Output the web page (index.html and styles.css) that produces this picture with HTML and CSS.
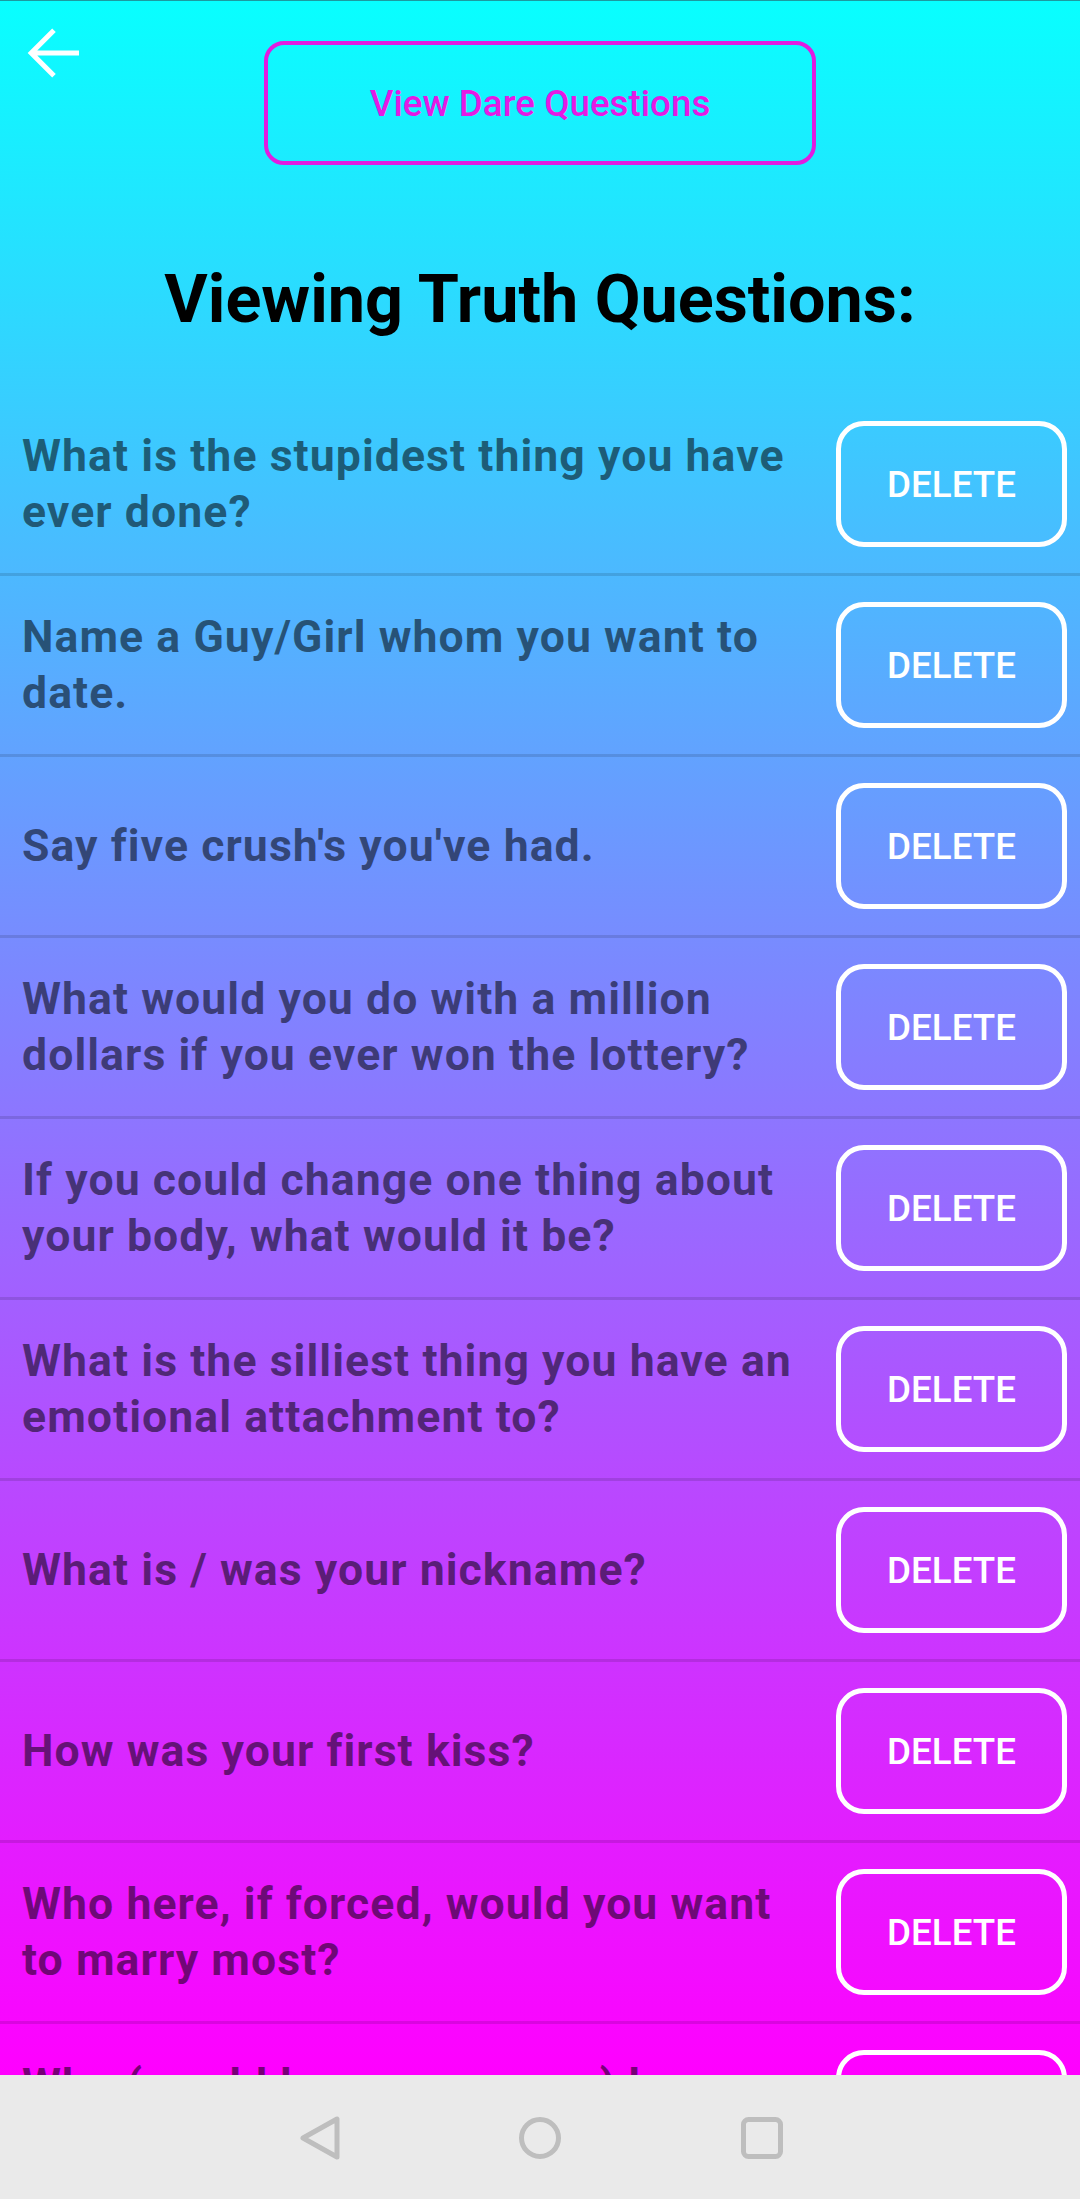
FILE: index.html
```html
<!DOCTYPE html>
<html lang="en">
<head>
<meta charset="utf-8">
<title>Viewing Truth Questions</title>
<link rel="stylesheet" href="styles.css">
</head>
<body>
<div class="screen">
  <main class="app">
    <header class="top">
      <button class="back" aria-label="Back">
        <svg viewBox="0 0 24 24" width="78" height="78"><path d="M20 12H5.6M12.3 5L5.3 12l7 7" fill="none" stroke="#fff" stroke-width="1.55" stroke-linejoin="miter"/></svg>
      </button>
      <button class="switch">View Dare Questions</button>
    </header>
    <h1 class="title">Viewing Truth Questions:</h1>
    <ul class="list">
      <li class="row"><p class="q">What is the stupidest thing you have ever done?</p><button class="del">DELETE</button></li>
      <li class="row"><p class="q">Name a Guy/Girl whom you want to date.</p><button class="del">DELETE</button></li>
      <li class="row"><p class="q">Say five crush's you've had.</p><button class="del">DELETE</button></li>
      <li class="row"><p class="q">What would you do with a million dollars if you ever won the lottery?</p><button class="del">DELETE</button></li>
      <li class="row"><p class="q">If you could change one thing about your body, what would it be?</p><button class="del">DELETE</button></li>
      <li class="row"><p class="q">What is the silliest thing you have an emotional attachment to?</p><button class="del">DELETE</button></li>
      <li class="row"><p class="q">What is / was your nickname?</p><button class="del">DELETE</button></li>
      <li class="row"><p class="q">How was your first kiss?</p><button class="del">DELETE</button></li>
      <li class="row"><p class="q">Who here, if forced, would you want to marry most?</p><button class="del">DELETE</button></li>
      <li class="row"><p class="q">Who (would be your answer) here would you kiss?</p><button class="del">DELETE</button></li>
    </ul>
  </main>
  <nav class="navbar">
    <svg class="nav-ic" viewBox="0 0 60 60" width="60" height="60"><path d="M13 31L47 12V50Z" fill="none" stroke="#bebebe" stroke-width="5" stroke-linejoin="round"/></svg>
    <svg class="nav-ic" viewBox="0 0 60 60" width="60" height="60"><circle cx="30" cy="31" r="18.5" fill="none" stroke="#bebebe" stroke-width="5"/></svg>
    <svg class="nav-ic" viewBox="0 0 60 60" width="60" height="60"><rect x="13.5" y="12.5" width="37" height="37" rx="5" fill="none" stroke="#bebebe" stroke-width="5"/></svg>
  </nav>
</div>
</body>
</html>
```

FILE: styles.css
```css
html, body {
  margin: 0;
  padding: 0;
  height: 2199px;
  overflow: hidden;
}

body {
  font-family: Roboto, "Noto Sans", "Liberation Sans", sans-serif;
}

.screen {
  height: 2199px;
  display: flex;
  flex-direction: column;
}

.app {
  height: 2075px;
  flex: none;
  overflow: hidden;
  box-sizing: border-box;
  border-top: 1px solid #1c9aa0;
  background: linear-gradient(180deg, #08ffff 0%, #ff00ff 100%);
}

.top {
  display: grid;
  grid-template-columns: 1fr 552px 1fr;
  padding-top: 13px;
}

.back {
  grid-column: 1;
  justify-self: start;
  align-self: start;
  width: 78px;
  height: 78px;
  margin-left: 14px;
  padding: 0;
  border: 0;
  background: none;
}

.back svg {
  display: block;
}

.switch {
  grid-column: 2;
  margin-top: 27px;
  height: 124px;
  border: 4px solid #e01ce0;
  border-radius: 20px;
  background: transparent;
  color: #e41ae4;
  font: 500 36.75px Roboto, sans-serif;
  padding: 0;
}

.title {
  margin: 94px 0 56px;
  text-align: center;
  font: 700 66.5px/80px Roboto, sans-serif;
  color: #000;
}

.list {
  list-style: none;
  margin: 0;
  padding: 0;
}

.row {
  height: 178px;
  display: flex;
  align-items: center;
  padding: 0 13px 0 22px;
  border-bottom: 3px solid rgba(0, 0, 0, 0.12);
}

.q {
  flex: 1;
  margin: 0 26px 0 0;
  font: 700 44.6px/56px Roboto, sans-serif;
  letter-spacing: 1.05px;
  color: rgba(0, 0, 0, 0.54);
}

.del {
  flex: none;
  width: 231px;
  height: 126px;
  border: 5px solid #fff;
  border-radius: 28px;
  background: transparent;
  color: #fff;
  font: 500 36.75px Roboto, sans-serif;
  padding: 0;
}

.navbar {
  height: 124px;
  flex: none;
  background: #eaeaea;
  display: flex;
  justify-content: center;
  align-items: center;
  gap: 160px;
}

.nav-ic {
  display: block;
}
```
